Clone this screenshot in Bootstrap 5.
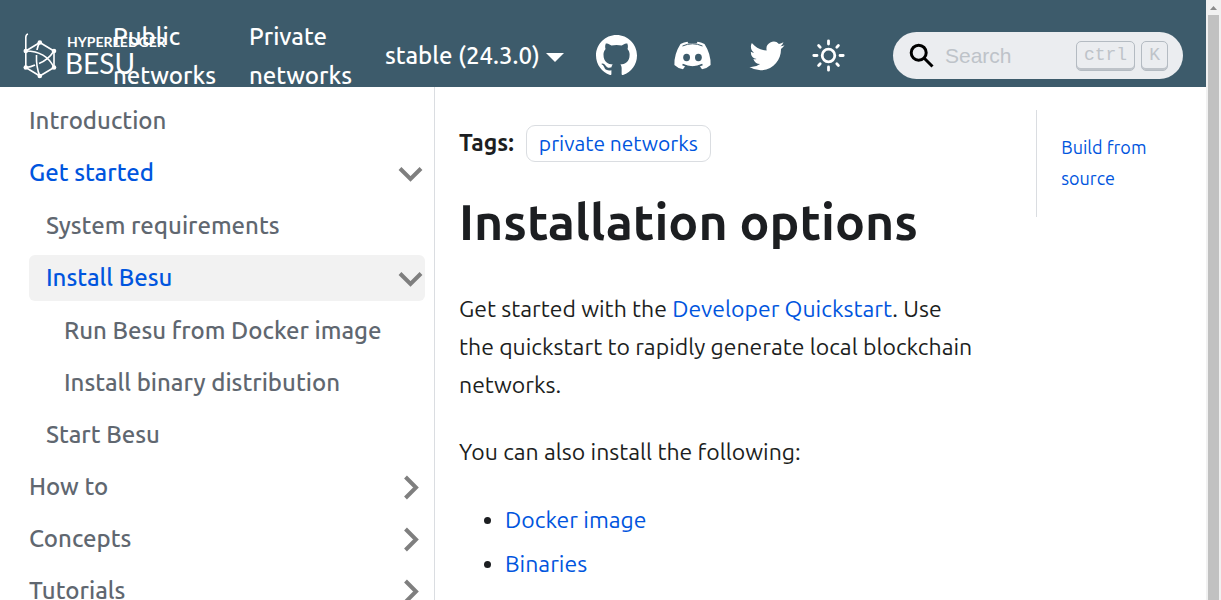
<!DOCTYPE html>
<html lang="en">
<head>
<meta charset="utf-8">
<meta name="viewport" content="width=device-width, initial-scale=1">
<title>Installation options | Hyperledger Besu</title>
<link href="https://cdn.jsdelivr.net/npm/bootstrap@5.3.0/dist/css/bootstrap.min.css" rel="stylesheet">
<style>
  :root { --besu-blue: #0055de; --besu-ink: #1c1e21; --besu-grey: #606770; --besu-line: #dadde1; }
  body { font-family: Ubuntu, "Open Sans", sans-serif; font-size: 23px; line-height: 38px; color: var(--besu-ink); }
  a { color: var(--besu-blue); text-decoration: none; }
  .site-bar { background: #3d5b6b; height: 87px; padding: 24px 23px 0; }
  .site-bar a, .version-btn { color: #fff; font-size: 24px; font-weight: 500; }
  .brand-box { width: 73px; flex: none; }
  .brand-box svg { overflow: visible; display: block; }
  .section-link { width: 136px; flex: none; padding: 0 17px; line-height: 39px; }
  .version-btn { background: none; border: 0; padding: 0 17px; white-space: nowrap; }
  .version-btn::after { border-top-width: 9px; border-left-width: 9px; border-right-width: 9px; margin-left: 6px; vertical-align: 2px; }
  .icon-btn { background: none; border: 0; padding: 0; color: #fff; }
  .icon-btn svg, .social svg { display: block; }
  .social { gap: 36px; margin-right: 26px; }
  .find-box { width: 290px; height: 47px; flex: none; }
  .find-box input { width: 100%; height: 47px; background: #ebedf0; border: 0; border-radius: 24px; padding: 0 120px 0 52px; font: 21px "Liberation Sans", sans-serif; }
  .find-box input::placeholder { color: #bec3c9; opacity: 1; }
  .find-box .lens { position: absolute; left: 16px; top: 11px; }
  .find-box .keys { position: absolute; right: 15px; top: 9px; gap: 6px; }
  .find-box kbd { background: none; color: #bec3c9; border: 1px solid #b4bbc2; border-radius: 5px; box-shadow: inset 0 -2px 0 #bec3c9; font: 18px/26px "Liberation Mono", monospace; padding: 0 7px; height: 30px; }
  .side-menu { width: 435px; flex: none; border-right: 1px solid var(--besu-line); padding: 11px 9px 0 29px; font-size: 24px; font-weight: 500; overflow: hidden; }
  .side-menu ul { display: flex; flex-direction: column; gap: 6px; }
  .side-menu ul ul { margin-top: 7px; }
  .side-menu a { display: flex; align-items: center; justify-content: space-between; height: 46px; border-radius: 6px; color: var(--besu-grey); white-space: nowrap; }
  .side-menu a.on { color: var(--besu-blue); }
  .side-menu a.here { background: #f2f2f2; }
  .side-menu .lvl-2 { padding-left: 17px; }
  .side-menu .lvl-3 { padding-left: 35px; }
  .side-menu svg { flex: none; color: #7f7f7f; }
  .doc-row { padding-top: 23px; }
  .doc-col { padding: 0 38px 0 24px; }
  .tag-line { margin-top: 14px; gap: 12px; }
  .tag-link { border: 1px solid var(--besu-line); border-radius: 9px; padding: 0 12px; font-size: 21px; line-height: 35px; }
  .doc-col h1 { font-size: 50px; line-height: 60px; font-weight: 700; margin: 29px 0 39px; }
  .doc-col p { margin-bottom: 29px; }
  .doc-col ul { padding: 1px 0 0 46px; }
  .doc-col li + li { margin-top: 6px; }
  .toc-col { padding: 0 0 0 23px; }
  .toc { border-left: 1px solid var(--besu-line); padding: 22px 24px 23px; font-size: 18px; line-height: 31px; }
  .scroll-rail { width: 15px; flex: none; background: #f1f1f1; padding: 0 2px; }
  .scroll-rail svg { display: block; }
  .scroll-thumb { background: #c1c1c1; }
</style>
</head>
<body class="d-flex vh-100 overflow-hidden bg-white">
<svg width="0" height="0" class="position-absolute" aria-hidden="true">
  <symbol id="down" viewBox="0 0 29 29"><path d="M4 9.5 14.5 20 25 9.5" fill="none" stroke="currentColor" stroke-width="4"/></symbol>
  <symbol id="right" viewBox="0 0 29 29"><path d="M9.5 4 20 14.5 9.5 25" fill="none" stroke="currentColor" stroke-width="4"/></symbol>
</svg>
<div class="d-flex flex-column flex-grow-1 overflow-hidden">
  <nav class="site-bar d-flex align-items-center flex-shrink-0" aria-label="Main">
    <a class="brand-box" href="#" aria-label="Hyperledger Besu">
      <svg width="146" height="46" viewBox="0 0 146 46" fill="none" stroke="#fff" stroke-width="1.6">
        <path d="M2.8 18V4.5Q2.8 1.5 5 1M2.8 18 16.8 9.5 31 18V34.5L16.8 43 2.8 34.5V18"/>
        <path d="M2.8 18Q23 18 31 34.5M2.8 34.5Q8 34 12 32M16 30.500Q25 27 31 18M16.800 9.500Q14.500 13 14 17M13.500 22Q13 34 16.800 43"/>
        <g fill="#fff" stroke="none"><circle cx="2.800" cy="18" r="2.300"/><circle cx="16.800" cy="9.500" r="2.300"/><circle cx="31" cy="18" r="2.300"/><circle cx="31" cy="34.500" r="2.300"/><circle cx="16.800" cy="43" r="2.300"/><circle cx="2.800" cy="34.500" r="2.300"/></g>
        <g fill="#fff" stroke="none" font-family="Lato, sans-serif"><text x="44" y="14" font-weight="700" font-size="14">HYPERLEDGER</text><text x="42" y="41" font-weight="400" font-size="28">BESU</text></g>
      </svg>
    </a>
    <a class="section-link" href="#">Public networks</a>
    <a class="section-link" href="#">Private networks</a>
    <button class="version-btn dropdown-toggle" type="button">stable (24.3.0)</button>
    <div class="social d-flex align-items-center ms-auto">
      <a href="#" aria-label="GitHub"><svg width="41" height="41" viewBox="0 0 16 16" fill="currentColor"><path d="M8 0C3.58 0 0 3.58 0 8c0 3.54 2.29 6.53 5.47 7.59.4.07.55-.17.55-.38 0-.19-.01-.82-.01-1.49-2.01.37-2.53-.49-2.69-.94-.09-.23-.48-.94-.82-1.13-.28-.15-.68-.52-.01-.53.63-.01 1.08.58 1.23.82.72 1.21 1.87.87 2.33.66.07-.52.28-.87.51-1.07-1.78-.2-3.64-.89-3.64-3.95 0-.87.31-1.59.82-2.15-.08-.2-.36-1.02.08-2.12 0 0 .67-.21 2.2.82.64-.18 1.32-.27 2-.27s1.36.09 2 .27c1.53-1.04 2.2-.82 2.2-.82.44 1.1.16 1.92.08 2.12.51.56.82 1.27.82 2.15 0 3.07-1.87 3.75-3.65 3.95.29.25.54.73.54 1.48 0 1.07-.01 1.93-.01 2.2 0 .21.15.46.55.38A8.010 8.010 0 0 0 16 8c0-4.420-3.580-8-8-8z"/></svg></a>
      <a href="#" aria-label="Discord"><svg width="39" height="41" viewBox="0 0 39 41" fill="currentColor"><path d="M7.500 9Q11 7 14.500 6.700L15.500 8.500Q19.500 8 23.500 8.500L24.500 6.700Q28 7 31.500 9 38 19 37.600 30 34 33.500 29 34.200L26.500 30.800Q28 30.200 29.500 29.300 19.500 34 9.500 29.300 11 30.200 12.500 30.800L10 34.200Q5 33.500 1.400 30 1 19 7.500 9Z"/><g fill="#3d5b6b"><ellipse cx="13.600" cy="22.500" rx="3.400" ry="3.700"/><ellipse cx="25.400" cy="22.500" rx="3.400" ry="3.700"/></g><path d="M9.500 11Q19.500 6.500 29.500 11" fill="none" stroke="#3d5b6b" stroke-width="1"/><path d="M9.500 29.500Q19.500 34.500 29.500 29.500" fill="none" stroke="#3d5b6b" stroke-width="1.500"/></svg></a>
      <a href="#" aria-label="Twitter"><svg width="38" height="38" viewBox="-1 -1 26 26" fill="currentColor"><path d="M23.953 4.570a10 10 0 0 1-2.825.775 4.958 4.958 0 0 0 2.163-2.723c-.951.555-2.005.959-3.127 1.184a4.920 4.920 0 0 0-8.384 4.482C7.690 8.095 4.067 6.130 1.640 3.162a4.822 4.822 0 0 0-.666 2.475c0 1.710.870 3.213 2.188 4.096a4.904 4.904 0 0 1-2.228-.616v.060a4.923 4.923 0 0 0 3.946 4.827 4.996 4.996 0 0 1-2.212.085 4.936 4.936 0 0 0 4.604 3.417 9.867 9.867 0 0 1-6.102 2.105c-.390 0-.779-.023-1.170-.067a13.995 13.995 0 0 0 7.557 2.209c9.053 0 13.998-7.496 13.998-13.985 0-.210 0-.420-.015-.630A9.935 9.935 0 0 0 24 4.590z"/></svg></a>
    </div>
    <button class="icon-btn me-5" type="button" aria-label="Switch between dark and light mode"><svg width="33" height="33" viewBox="0 0 33 33" fill="none" stroke="currentColor" stroke-width="2.800" stroke-linecap="round"><circle cx="16.500" cy="16.500" r="6.300"/><path d="M16.500 1.800V5M16.500 28v3.200M1.800 16.500H5M28 16.500h3.200M6.600 6.600l1.600 1.600M24.800 24.800l1.600 1.600M6.600 26.400l1.600-1.600M24.800 8.200l1.600-1.600"/></svg></button>
    <div class="find-box position-relative">
      <input type="search" placeholder="Search" aria-label="Search">
      <svg class="lens" width="26" height="26" viewBox="0 0 26 26" fill="none" stroke="#000" stroke-width="3"><circle cx="9.700" cy="9.700" r="7.500"/><path d="M15 15 23.500 23.500"/></svg>
      <div class="keys d-flex"><kbd>ctrl</kbd><kbd>K</kbd></div>
    </div>
  </nav>
  <div class="d-flex flex-grow-1 overflow-hidden">
    <aside class="side-menu">
      <ul class="list-unstyled m-0">
        <li><a href="#">Introduction</a></li>
        <li><a class="on" href="#">Get started<svg width="29" height="29"><use href="#down"/></svg></a>
          <ul class="list-unstyled">
            <li><a class="lvl-2" href="#">System requirements</a></li>
            <li><a class="lvl-2 on here" href="#">Install Besu<svg width="29" height="29"><use href="#down"/></svg></a>
              <ul class="list-unstyled">
                <li><a class="lvl-3" href="#">Run Besu from Docker image</a></li>
                <li><a class="lvl-3" href="#">Install binary distribution</a></li>
              </ul>
            </li>
            <li><a class="lvl-2" href="#">Start Besu</a></li>
          </ul>
        </li>
        <li><a href="#">How to<svg width="29" height="29"><use href="#right"/></svg></a></li>
        <li><a href="#">Concepts<svg width="29" height="29"><use href="#right"/></svg></a></li>
        <li><a href="#">Tutorials<svg width="29" height="29"><use href="#right"/></svg></a></li>
      </ul>
    </aside>
    <main class="flex-grow-1 overflow-hidden">
      <div class="doc-row row g-0">
        <article class="doc-col col-9">
          <div class="tag-line d-flex align-items-center"><b>Tags:</b><a class="tag-link" href="#">private networks</a></div>
          <h1>Installation options</h1>
          <p>Get started with the <a href="#">Developer Quickstart</a>. Use the quickstart to rapidly generate local blockchain networks.</p>
          <p>You can also install the following:</p>
          <ul>
            <li><a href="#">Docker image</a></li>
            <li><a href="#">Binaries</a></li>
          </ul>
        </article>
        <div class="toc-col col-3"><div class="toc"><a href="#">Build from source</a></div></div>
      </div>
    </main>
  </div>
</div>
<div class="scroll-rail d-flex flex-column" aria-hidden="true">
  <svg width="11" height="15" viewBox="0 0 11 15"><path d="M2 10 5.500 6 9 10Z" fill="#8b8b8b"/></svg>
  <div class="scroll-thumb flex-grow-1"></div>
</div>
<script src="https://cdn.jsdelivr.net/npm/bootstrap@5.3.0/dist/js/bootstrap.bundle.min.js"></script>
</body>
</html>
